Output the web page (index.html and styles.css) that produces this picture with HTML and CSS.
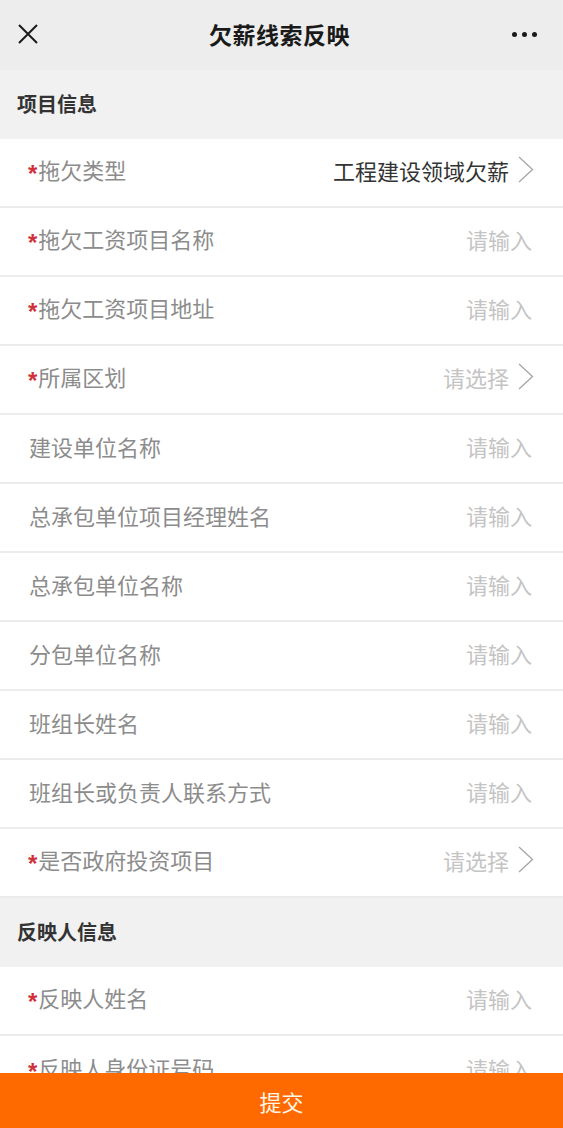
FILE: index.html
```html
<!DOCTYPE html>
<html lang="zh-CN">
<head>
<meta charset="utf-8">
<title>欠薪线索反映</title>
<link rel="stylesheet" href="styles.css">
</head>
<body>
<header class="nav">
  <svg class="nav-close" width="22" height="22" viewBox="0 0 22 22"><path d="M2 2 L20 20 M20 2 L2 20" stroke="#1a1a1a" stroke-width="2" fill="none"/></svg>
  <h1 class="nav-title">欠薪线索反映</h1>
  <div class="nav-more"><span></span><span></span><span></span></div>
</header>
<main>
  <div class="section">项目信息</div>
  <div class="row"><span class="label"><i>*</i>拖欠类型</span><span class="value">工程建设领域欠薪<svg class="chev" width="16" height="27" viewBox="0 0 16 27"><path d="M1 1 L14.5 13.5 L1 26" stroke="#a8a8a8" stroke-width="1.4" fill="none"/></svg></span></div>
  <div class="row"><span class="label"><i>*</i>拖欠工资项目名称</span><span class="ph">请输入</span></div>
  <div class="row"><span class="label"><i>*</i>拖欠工资项目地址</span><span class="ph">请输入</span></div>
  <div class="row"><span class="label"><i>*</i>所属区划</span><span class="ph sel">请选择<svg class="chev" width="16" height="27" viewBox="0 0 16 27"><path d="M1 1 L14.5 13.5 L1 26" stroke="#a8a8a8" stroke-width="1.4" fill="none"/></svg></span></div>
  <div class="row"><span class="label">建设单位名称</span><span class="ph">请输入</span></div>
  <div class="row"><span class="label">总承包单位项目经理姓名</span><span class="ph">请输入</span></div>
  <div class="row"><span class="label">总承包单位名称</span><span class="ph">请输入</span></div>
  <div class="row"><span class="label">分包单位名称</span><span class="ph">请输入</span></div>
  <div class="row"><span class="label">班组长姓名</span><span class="ph">请输入</span></div>
  <div class="row"><span class="label">班组长或负责人联系方式</span><span class="ph">请输入</span></div>
  <div class="row"><span class="label"><i>*</i>是否政府投资项目</span><span class="ph sel">请选择<svg class="chev" width="16" height="27" viewBox="0 0 16 27"><path d="M1 1 L14.5 13.5 L1 26" stroke="#a8a8a8" stroke-width="1.4" fill="none"/></svg></span></div>
  <div class="section">反映人信息</div>
  <div class="row"><span class="label"><i>*</i>反映人姓名</span><span class="ph">请输入</span></div>
  <div class="row"><span class="label"><i>*</i>反映人身份证号码</span><span class="ph">请输入</span></div>
</main>
<button class="submit">提交</button>
</body>
</html>
```
FILE: styles.css
```css
* { box-sizing: border-box; }
html, body { margin: 0; padding: 0; }
body {
  background: #f1f1f1;
  font-family: "Noto Sans CJK SC", "Noto Sans", sans-serif;
  overflow: hidden;
}
.nav {
  height: 70px;
  background: #ededed;
  display: flex;
  align-items: center;
  justify-content: space-between;
  padding: 0 26px 2px 17px;
}
.nav-close { display: block; }
.nav-title {
  margin: 0;
  font-size: 23px;
  font-weight: 700;
  color: #1a1a1a;
  letter-spacing: 0.5px;
  padding-left: 8px;
}
.nav-more { display: flex; gap: 5px; width: 25px; }
.nav-more span {
  width: 5px; height: 5px; border-radius: 50%; background: #1a1a1a;
}
.section {
  height: 69px;
  display: flex;
  align-items: center;
  padding-left: 17px;
  padding-bottom: 2px;
  font-size: 20px;
  font-weight: 700;
  color: #333;
  background: #f1f1f1;
}
.row {
  height: 69px;
  background: #fff;
  border-bottom: 2px solid #ececec;
  display: flex;
  align-items: center;
  justify-content: space-between;
  padding: 0 31px 6px 29px;
}
.row:last-child { border-bottom: none; }
.label {
  font-size: 22px;
  line-height: 32px;
  color: #8c8c8c;
}
.label i {
  font-style: normal;
  font-weight: 700;
  color: #d0303a;
  font-size: 24px;
  line-height: 1;
  font-family: "Liberation Sans", sans-serif;
  vertical-align: -3px;
  margin-left: -1px;
  margin-right: 1px;
}
.value {
  font-size: 22px;
  color: #333;
  display: flex;
  align-items: center;
  gap: 9px;
  margin-right: -2px;
}
.ph {
  font-size: 22px;
  color: #c4c4c4;
}
.ph.sel {
  display: flex;
  align-items: center;
  gap: 9px;
  margin-right: -2px;
}
.chev { display: block; }
.submit {
  position: fixed;
  left: 0; right: 0; bottom: 0;
  height: 55px;
  width: 100%;
  border: none;
  background: #ff6a00;
  color: #fff6ea;
  font-family: "Noto Sans CJK SC", sans-serif;
  font-size: 22px;
  padding: 0;
}
```
